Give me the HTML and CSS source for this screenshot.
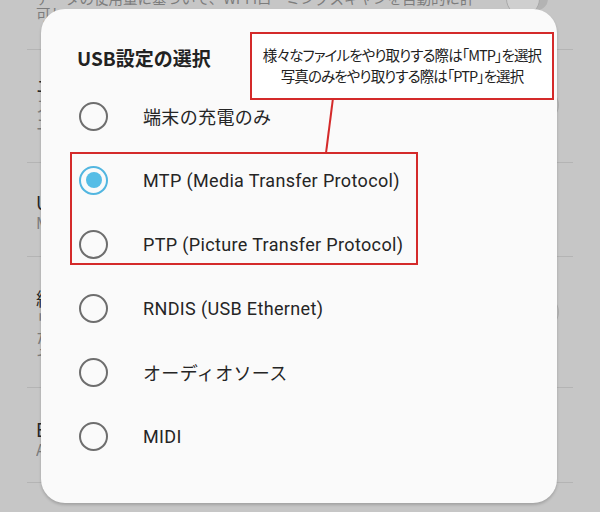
FILE: index.html
```html
<!DOCTYPE html>
<html lang="ja">
<head>
  <meta charset="UTF-8" />
  <title>USB設定の選択</title>
  <link rel="stylesheet" href="styles.css">
</head>
<body>
  <div class="page">
    <!-- 背景の設定リスト（暗く表示） -->
    <ul class="settings">
      <li class="item item-first">
        <p class="sub sub-top">データの使用量に基づいて、Wi-Fiローミングスキャンを自動的に許</p>
        <div class="clip">
          <p class="sub sub-top">可します。</p>
        </div>
        <span class="toggle toggle-top"></span>
      </li>
      <li class="item item-2">
        <div class="clip">
          <p class="name">ニアバイデバイススキャン</p>
          <p class="sub">スキャンして近くのデバイスを検出</p>
          <p class="sub">ニアバイデバイスを利用</p>
        </div>
        <span class="toggle toggle-side"></span>
      </li>
      <li class="item item-3">
        <div class="clip">
          <p class="name">USB設定</p>
          <p class="sub">MTP</p>
        </div>
      </li>
      <li class="item item-4">
        <div class="clip">
          <p class="name">経由の接続</p>
          <p class="sub">リンクを使用</p>
          <p class="sub">たデバイス</p>
          <p class="sub">そのほか</p>
        </div>
        <span class="toggle toggle-side"></span>
      </li>
      <li class="item item-5">
        <div class="clip">
          <p class="name">Ethernet</p>
          <p class="sub">Android</p>
        </div>
      </li>
    </ul>

    <!-- ダイアログ -->
    <div class="dialog">
      <h2 class="dialog-title">USB設定の選択</h2>
      <ul class="options">
        <li class="option"><span class="radio"></span><span class="label">端末の充電のみ</span></li>
        <li class="option"><span class="radio checked"></span><span class="label">MTP (Media Transfer Protocol)</span></li>
        <li class="option"><span class="radio"></span><span class="label">PTP (Picture Transfer Protocol)</span></li>
        <li class="option"><span class="radio"></span><span class="label">RNDIS (USB Ethernet)</span></li>
        <li class="option"><span class="radio"></span><span class="label">オーディオソース</span></li>
        <li class="option"><span class="radio"></span><span class="label">MIDI</span></li>
      </ul>
    </div>

    <!-- 注釈 -->
    <div class="note">
      <p>様々なファイルをやり取りする際は「MTP」を選択</p>
      <p>写真のみをやり取りする際は「PTP」を選択</p>
    </div>
    <svg class="note-line" width="20" height="56" viewBox="0 0 20 56">
      <line x1="13" y1="0" x2="6" y2="55" stroke="#d42a2a" stroke-width="2" />
    </svg>
    <div class="highlight"></div>
  </div>
</body>
</html>
```

FILE: styles.css
```css
* {
  box-sizing: border-box;
}

body {
  margin: 0;
  background: #c6c6c6;
  font-family: Roboto, "Noto Sans CJK JP", sans-serif;
  color: #212121;
}

.page {
  position: relative;
  width: 600px;
  height: 512px;
  overflow: hidden;
}

/* 背景の設定リスト */
.settings {
  list-style: none;
  margin: -12px 0 0;
  padding: 0 27px;
}
.item {
  position: relative;
  border-bottom: 1px solid #b4b4b4;
  padding-left: 9px;
}
.item p {
  margin: 0;
  white-space: nowrap;
}
/* ダイアログの下に隠れる部分は切り取る */
.clip {
  width: 22px;
  overflow: hidden;
}
.item .name {
  font-family: "Noto Sans CJK JP", sans-serif;
  font-size: 18px;
  line-height: 22px;
  color: #262626;
}
.item .sub {
  font-family: "Noto Sans CJK JP", sans-serif;
  font-size: 16px;
  line-height: 18px;
  color: #7c7c7c;
}
.item .sub-top {
  font-size: 14.5px;
  line-height: 16px;
}
.item-first {
  height: 62px;
  padding-top: 2px;
}
.item-2 {
  height: 113px;
  padding-top: 24px;
}
.item-3 {
  height: 94px;
  padding-top: 28px;
}
.item-4 {
  height: 131px;
  padding-top: 30px;
}
.item-5 {
  height: 95px;
  padding-top: 30px;
}

.toggle {
  position: absolute;
  width: 34px;
  height: 34px;
  border-radius: 50%;
  background: #cfcfcf;
  border: 1px solid #a9a9a9;
}
.toggle-top {
  right: 33px;
  top: -6px;
  box-shadow: 14px 0 0 -6px #b3b3b3;
}
.toggle-side {
  right: 14px;
  top: 38px;
  background: #bdbdbd;
  border-color: #b0b0b0;
}

/* ダイアログ */
.dialog {
  position: absolute;
  left: 41px;
  top: 9px;
  width: 516px;
  height: 494px;
  background: #fafafa;
  border-radius: 24px;
  box-shadow: 0 2px 3px rgba(0, 0, 0, 0.18);
  padding: 37px 0 0 36px;
}
.dialog-title {
  margin: 0;
  font-family: "Noto Sans CJK JP", sans-serif;
  font-size: 19px;
  line-height: 24px;
  font-weight: 700;
  color: #222;
}
.options {
  list-style: none;
  margin: 14px 0 0;
  padding: 0;
}
.option {
  display: flex;
  align-items: center;
  gap: 35px;
  height: 64px;
  padding-left: 2px;
}
.radio {
  flex: none;
  display: flex;
  align-items: center;
  justify-content: center;
  width: 29px;
  height: 29px;
  border: 2px solid #6e6e6e;
  border-radius: 50%;
}
.radio.checked {
  border: 2.5px solid #52b6e0;
}
.radio.checked::after {
  content: "";
  width: 16px;
  height: 16px;
  border-radius: 50%;
  background: #56bde6;
}
.label {
  font-size: 18px;
  letter-spacing: 0.35px;
  color: #252525;
  white-space: nowrap;
}

/* 注釈 */
.note {
  position: absolute;
  left: 250px;
  top: 32px;
  width: 304px;
  height: 68px;
  border: 2px solid #d42a2a;
  background: #fff;
  padding-top: 10px;
  text-align: center;
  font-family: "Noto Sans CJK JP", sans-serif;
  font-feature-settings: "palt";
  font-size: 14.5px;
  letter-spacing: -0.9px;
  line-height: 21px;
  color: #222;
}
.note p {
  margin: 0;
}
.note-line {
  position: absolute;
  left: 320px;
  top: 98px;
}
.highlight {
  position: absolute;
  left: 70px;
  top: 152px;
  width: 348px;
  height: 113px;
  border: 2px solid #d42a2a;
}
```
